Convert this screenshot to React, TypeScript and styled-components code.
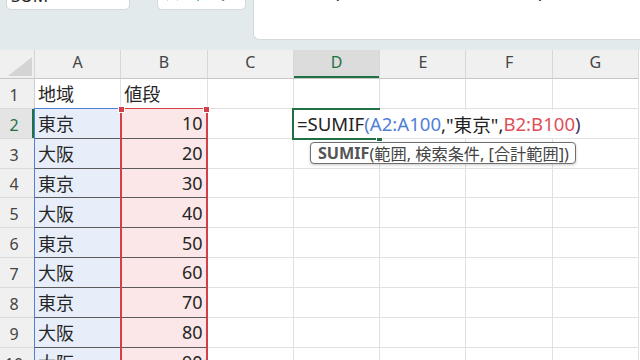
import React from 'react';
import styled, { createGlobalStyle, css } from 'styled-components';

const GREEN = '#1e7145';
const BLUE = '#4f80d6';
const RED = '#d2404a';

const GlobalStyle = createGlobalStyle`
  html, body {
    margin: 0;
    padding: 0;
  }
  body {
    background: #fff;
    font-family: "Noto Sans", "Noto Sans CJK JP", sans-serif;
    overflow: hidden;
  }
`;

const Window = styled.div`
  width: 640px;
  height: 360px;
  overflow: hidden;
  display: flex;
  flex-direction: column;
`;

const TopBar = styled.div`
  height: 50px;
  flex: none;
  background: #e2eaec;
  display: flex;
  align-items: flex-start;
`;

const NameBox = styled.div`
  margin: -20px 0 0 6px;
  width: 124px;
  height: 30px;
  box-sizing: border-box;
  background: #fff;
  border: 1px solid #d3d9db;
  border-radius: 5px;
  padding: 5px 0 0 4px;
  font-size: 17px;
  line-height: 20px;
  color: #222;
`;

const Grip = styled.div`
  width: 27px;
  margin-top: -15px;
  text-align: center;
  font-size: 14px;
  line-height: 16px;
  color: #777;
`;

const ButtonBox = styled.div`
  margin-top: -20px;
  width: 89px;
  height: 30px;
  box-sizing: border-box;
  background: #fff;
  border: 1px solid #d3d9db;
  border-radius: 5px;
  display: flex;
  align-items: flex-end;
  padding: 0 0 8px 7px;
`;

const IconSlot = styled.span<{ $gap: number }>`
  display: flex;
  margin-left: ${(p) => p.$gap}px;
`;

const Fx = styled.span`
  margin-left: 15px;
  font-family: "DejaVu Serif", serif;
  font-style: italic;
  font-size: 15px;
  line-height: 15px;
  color: #333;
`;

const FormulaBar = styled.div`
  flex: 1;
  margin-left: 7px;
  height: 40px;
  box-sizing: border-box;
  background: #fff;
  border-left: 1px solid #d3d9db;
  border-bottom: 1px solid #d3d9db;
  border-radius: 0 0 0 6px;
`;

const FormulaBarText = styled.div`
  margin-top: -18px;
  padding-left: 15px;
  font-size: 18px;
  line-height: 18px;
  white-space: nowrap;
  color: #222;
`;

const Sheet = styled.div`
  flex: 1;
  display: grid;
  grid-template-columns: 35px repeat(7, 86.3px);
  grid-template-rows: 29px repeat(10, 29.85px);
  overflow: hidden;
  background: #fff;
`;

const Slot = css<{ $r: number; $c: number }>`
  grid-row: ${(p) => p.$r};
  grid-column: ${(p) => p.$c};
`;

const Corner = styled.div`
  grid-column: 1;
  grid-row: 1;
  background: #f0f0f0;
  border-right: 1px solid #d4d4d4;
  border-bottom: 1px solid #c6c6c6;
  display: flex;
  align-items: flex-end;
  justify-content: flex-end;
  padding: 0 2px 2px 0;
`;

const ColHead = styled.div<{ $r: number; $c: number; $active?: boolean }>`
  ${Slot}
  background: ${(p) => (p.$active ? '#dcdcdc' : '#f0f0f0')};
  border-right: 1px solid #d8d8d8;
  border-bottom: 1px solid #c6c6c6;
  display: flex;
  align-items: center;
  justify-content: center;
  padding-bottom: 5px;
  font-size: 16px;
  color: ${(p) => (p.$active ? GREEN : '#444')};
  ${(p) =>
    p.$active &&
    css`
      box-shadow: inset 0 -2px 0 ${GREEN};
    `}
`;

const RowHead = styled.div<{ $r: number; $c: number; $active?: boolean }>`
  ${Slot}
  background: ${(p) => (p.$active ? '#e4e4e4' : '#f0f0f0')};
  border-right: 1px solid #cfcfcf;
  border-bottom: 1px solid #dadada;
  display: flex;
  align-items: center;
  justify-content: center;
  padding: 3px 6px 0 0;
  font-size: 16px;
  color: ${(p) => (p.$active ? GREEN : '#444')};
  ${(p) =>
    p.$active &&
    css`
      box-shadow: inset -2px 0 0 ${GREEN};
    `}
`;

const Cell = styled.div<{
  $r: number;
  $c: number;
  $tint?: 'blue' | 'red';
  $right?: boolean;
  $ruled?: boolean;
}>`
  ${Slot}
  border-right: 1px solid #e1e1e1;
  border-bottom: 1px solid ${(p) => (p.$ruled ? '#5a5a5a' : '#e1e1e1')};
  background: ${(p) => (p.$tint === 'blue' ? '#e7eef9' : p.$tint === 'red' ? '#fbe7e7' : '#fff')};
  display: flex;
  align-items: center;
  justify-content: ${(p) => (p.$right ? 'flex-end' : 'flex-start')};
  padding: 0 4px 0 3px;
  font-size: 18px;
  color: #262626;
  white-space: nowrap;
  overflow: hidden;
`;

const Range = styled.div<{ $col: number; $color: string; $side: number }>`
  grid-column: ${(p) => p.$col};
  grid-row: 3 / -1;
  position: relative;
  z-index: 1;
  margin: -1px 0 0 -1px;
  border: ${(p) => p.$side}px solid ${(p) => p.$color};
  border-top-width: 1px;
  border-bottom: none;
  pointer-events: none;
`;

const RangeHandle = styled.span<{ $color: string; $side: 'left' | 'right' }>`
  position: absolute;
  top: -3px;
  ${(p) => p.$side}: -4px;
  width: 5px;
  height: 5px;
  background: ${(p) => p.$color};
  border: 1px solid #fff;
`;

const ActiveCell = styled.div`
  grid-column: 5;
  grid-row: 3;
  position: relative;
  z-index: 2;
  margin: -1px 0 -1px -2px;
  border: 2px solid ${GREEN};
  border-right: none;
`;

const FillHandle = styled.span`
  position: absolute;
  right: -3px;
  bottom: -4px;
  width: 5px;
  height: 5px;
  background: ${GREEN};
  border: 1px solid #fff;
`;

const Editor = styled.div`
  grid-column: 5 / span 4;
  grid-row: 3;
  justify-self: start;
  position: relative;
  z-index: 3;
  margin: 1px 0 1px 0;
  padding: 0 8px 0 3px;
  background: #fff;
  display: flex;
  align-items: center;
  font-size: 18.6px;
  white-space: nowrap;
  color: #222;
`;

const Ref = styled.span<{ $color: string }>`
  color: ${(p) => p.$color};
`;

const Tooltip = styled.div`
  grid-column: 5 / span 4;
  grid-row: 4;
  justify-self: start;
  align-self: start;
  position: relative;
  z-index: 4;
  margin: 3px 0 0 16px;
  height: 22px;
  box-sizing: border-box;
  padding: 0 6px 0 7px;
  display: flex;
  align-items: center;
  background: #fff;
  border: 1px solid #6f6f6f;
  border-radius: 4px;
  box-shadow: 0 1px 3px rgba(0, 0, 0, 0.22);
  font-size: 16.2px;
  color: #444;
  white-space: nowrap;
`;

const FnName = styled.b`
  font-weight: 700;
  color: #555;
`;

const COLS = ['A', 'B', 'C', 'D', 'E', 'F', 'G'];

const DATA: [string, string][] = [
  ['地域', '値段'],
  ['東京', '10'],
  ['大阪', '20'],
  ['東京', '30'],
  ['大阪', '40'],
  ['東京', '50'],
  ['大阪', '60'],
  ['東京', '70'],
  ['大阪', '80'],
  ['大阪', '90'],
];

const CrossIcon = () => (
  <svg width="13" height="13" viewBox="0 0 13 13">
    <path d="M1 1 L12 12 M12 1 L1 12" stroke="#e0443e" strokeWidth="1.6" fill="none" />
  </svg>
);

const CheckIcon = () => (
  <svg width="16" height="13" viewBox="0 0 16 13">
    <path d="M1 6.5 L6 12 L15 1" stroke="#2da86f" strokeWidth="1.6" fill="none" />
  </svg>
);

const CornerTriangle = () => (
  <svg width="24" height="19" viewBox="0 0 24 19">
    <polygon points="24,0 24,19 0,19" fill="#d4d4d4" />
  </svg>
);

const App = () => {
  return (
    <Window>
      <GlobalStyle />
      <TopBar>
        <NameBox>SUM</NameBox>
        <Grip>⋮</Grip>
        <ButtonBox>
          <IconSlot $gap={1}>
            <CrossIcon />
          </IconSlot>
          <IconSlot $gap={13}>
            <CheckIcon />
          </IconSlot>
          <Fx>fx</Fx>
        </ButtonBox>
        <FormulaBar>
          <FormulaBarText>=SUMIF(A2:A100,"東京",B2:B100)</FormulaBarText>
        </FormulaBar>
      </TopBar>
      <Sheet>
        <Corner>
          <CornerTriangle />
        </Corner>
        {COLS.map((c, ci) => (
          <ColHead key={c} $r={1} $c={ci + 2} $active={c === 'D'}>
            {c}
          </ColHead>
        ))}
        {DATA.map(([a, b], i) => {
          const r = i + 1;
          const gr = r + 1;
          const body = r >= 2;
          return (
            <React.Fragment key={r}>
              <RowHead $r={gr} $c={1} $active={r === 2}>
                {r}
              </RowHead>
              <Cell $r={gr} $c={2} $tint={body ? 'blue' : undefined} $ruled={body}>
                {a}
              </Cell>
              <Cell $r={gr} $c={3} $tint={body ? 'red' : undefined} $ruled={body} $right={body}>
                {b}
              </Cell>
              {COLS.slice(2).map((c, ci) => (
                <Cell key={c} $r={gr} $c={ci + 4} />
              ))}
            </React.Fragment>
          );
        })}
        <Range $col={2} $color={BLUE} $side={1} />
        <Range $col={3} $color={RED} $side={2}>
          <RangeHandle $color={RED} $side="left" />
          <RangeHandle $color={RED} $side="right" />
        </Range>
        <ActiveCell>
          <FillHandle />
        </ActiveCell>
        <Editor>
          =SUMIF<Ref $color="#5a7fcc">(</Ref>
          <Ref $color={BLUE}>A2:A100</Ref>,"東京",<Ref $color="#e0505a">B2:B100</Ref>
          <Ref $color="#3d3a66">)</Ref>
        </Editor>
        <Tooltip>
          <FnName>SUMIF</FnName>(範囲, 検索条件, [合計範囲])
        </Tooltip>
      </Sheet>
    </Window>
  );
};

export default App;
